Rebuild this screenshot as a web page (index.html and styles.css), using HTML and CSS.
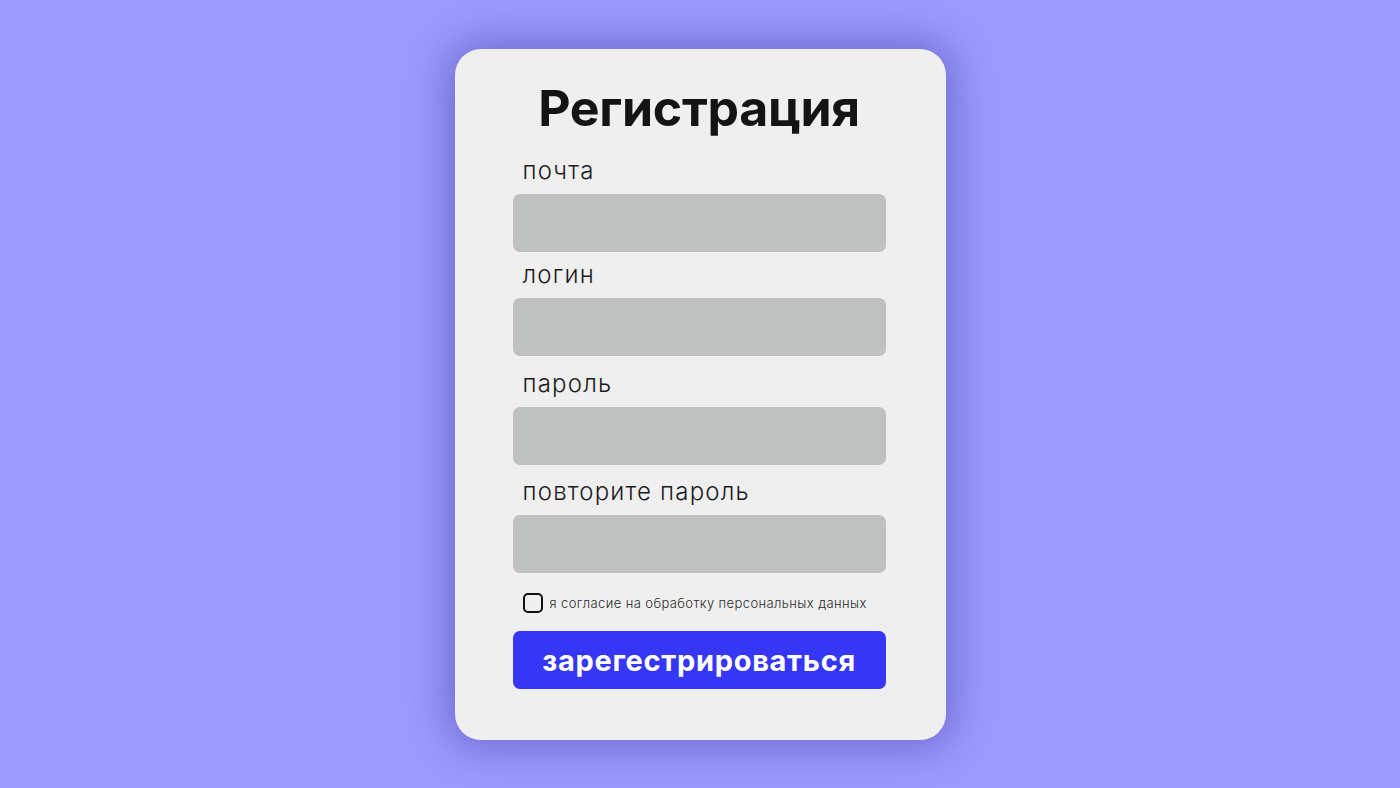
FILE: index.html
```html
<!DOCTYPE html>
<html lang="ru">
<head>
<meta charset="utf-8">
<title>Регистрация</title>
<link rel="stylesheet" href="styles.css">
</head>
<body>
<form class="card">
  <h1 class="title">Регистрация</h1>
  <div class="field field-1">
    <label class="label">почта</label>
    <div class="input"></div>
  </div>
  <div class="field field-2">
    <label class="label">логин</label>
    <div class="input"></div>
  </div>
  <div class="field field-3">
    <label class="label">пароль</label>
    <div class="input"></div>
  </div>
  <div class="field field-4">
    <label class="label">повторите пароль</label>
    <div class="input"></div>
  </div>
  <div class="agree">
    <span class="checkbox"></span>
    <span class="agree-text">я согласие на обработку персональных данных</span>
  </div>
  <div class="button">зарегестрироваться</div>
</form>
</body>
</html>
```
FILE: styles.css
```css
* { box-sizing: border-box; }
html, body { margin: 0; padding: 0; }
body {
  width: 1400px;
  height: 788px;
  background: #9b9bfd;
  display: flex;
  align-items: center;
  justify-content: center;
  font-family: Inter, "Noto Sans", sans-serif;
  color: #141414;
}
.card {
  width: 491px;
  height: 691px;
  background: #efefef;
  border-radius: 26px;
  box-shadow: 0 0 42px 8px rgba(70, 60, 170, 0.5);
  padding: 29px 60px 0 58px;
  display: flex;
  flex-direction: column;
  margin-top: 1px;
}
.title {
  margin: 0;
  font-size: 50px;
  line-height: 60px;
  font-weight: 700;
  text-align: center;
  letter-spacing: -0.3px;
  color: #141414;
}
.field { display: flex; flex-direction: column; }
.field-1 { margin-top: 18px; }
.field-2 { margin-top: 8px; }
.field-3 { margin-top: 13px; }
.field-4 { margin-top: 12px; }
.label {
  font-size: 24px;
  line-height: 30px;
  font-weight: 300;
  letter-spacing: 1.2px;
  padding-left: 10px;
  margin-bottom: 8px;
  color: #1c1c1c;
}
.input {
  height: 58px;
  background: #bfc1c0;
  border-radius: 7px;
}
.agree {
  display: flex;
  align-items: center;
  margin-top: 20px;
  padding-left: 10px;
  height: 20px;
}
.checkbox {
  width: 20px;
  height: 20px;
  border: 2px solid #111;
  border-radius: 5px;
  flex: none;
}
.agree-text {
  margin-left: 7px;
  font-size: 13px;
  font-weight: 300;
  letter-spacing: 0.4px;
  color: #2a2a2a;
}
.button {
  margin-top: 18px;
  height: 58px;
  background: #3636f6;
  border-radius: 7px;
  color: #fff;
  font-weight: 700;
  font-size: 29px;
  display: flex;
  align-items: center;
  justify-content: center;
  letter-spacing: 0.7px;
}
```
